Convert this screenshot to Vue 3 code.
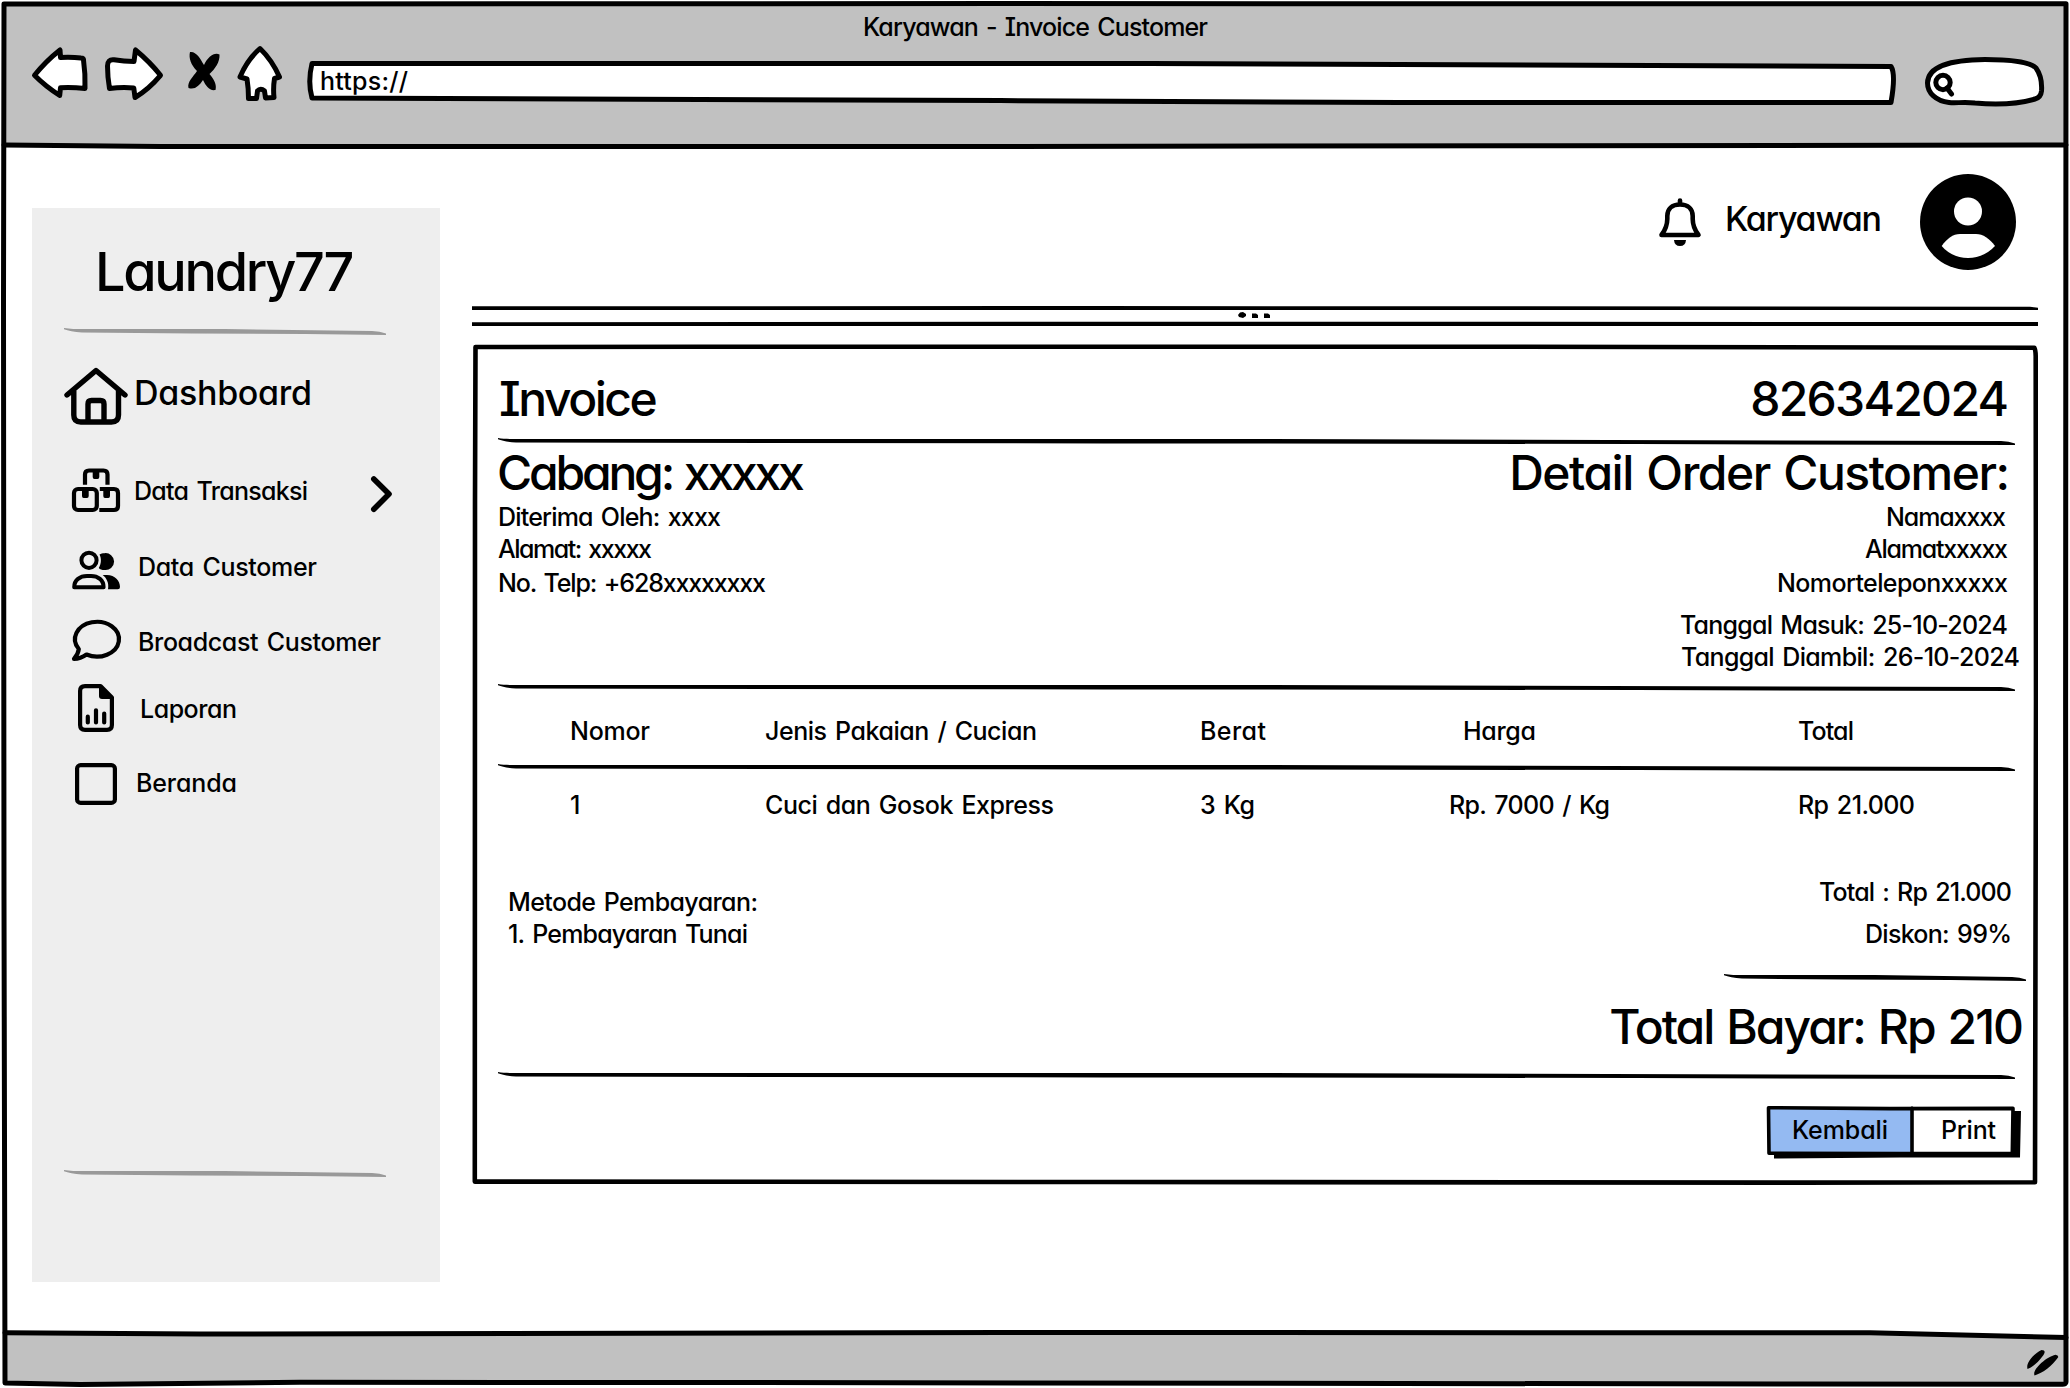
<script setup>
// Adjusts tracking so that a label fills the given width in pixels.
const vFit = {
  mounted(el, { value }) {
    const size = parseFloat(getComputedStyle(el).fontSize)
    const count = el.textContent.trim().length
    if (count < 2) return
    const natural = el.getBoundingClientRect().width
    const spacing = (value + size * 0.12 - natural) / (count - 1)
    el.style.letterSpacing = `${spacing}px`
    el.style.marginRight = `${-spacing}px`
  },
}

// Hand-drawn divider with tapered ends.
const rule = (w) =>
  `M0 0C6 1 12 1 20 1L${w * 0.5} 1L${w - 14} 3Q${w - 6} 3.4 ${w} 5.6V7L${w * 0.75} 6L${w * 0.4} 5.4L18 4.6C10 4 4 2.6 0 1.2Z`

const columns = [
  { label: 'Nomor', width: 77 },
  { label: 'Jenis Pakaian / Cucian', width: 269 },
  { label: 'Berat', width: 63 },
  { label: 'Harga', width: 70, inset: true },
  { label: 'Total', width: 53 },
]
const cells = [
  { label: '1', width: 9 },
  { label: 'Cuci dan Gosok Express', width: 286 },
  { label: '3 Kg', width: 52 },
  { label: 'Rp. 7000 / Kg', width: 158 },
  { label: 'Rp 21.000', width: 114 },
]
</script>

<template>
  <div class="window">
    <svg class="layer" viewBox="0 0 2070 1388" width="2070" height="1388">
      <path fill="#c1c1c1" d="M4 4H2066V145H4ZM5 1333L1870 1333L2066 1337V1384H5Z" />
      <g class="ink" stroke-width="5">
        <path d="M4 4L1000 3.6L2066 3.8L2065.6 700L2066 1382Q2066 1384.5 2062 1384.3L1800 1384L700 1382.5L300 1382.3L80 1384.5L5 1383L4 900L3.500 300Z" />
        <path d="M4 145L160 146.400L1000 146.400L1560 145.800L2066 145" />
        <path d="M5 1332.800L200 1334L1000 1332.500L1870 1332.800L2066 1337.600" />
      </g>
      <path d="M2027.500 1369C2025.500 1362 2035 1353 2041.500 1350C2045 1350 2045.500 1352 2043.500 1355C2038 1362.500 2033 1367 2027.500 1369ZM2034.500 1375.500C2032 1369.500 2046 1357 2055.500 1354.700Q2059 1355.500 2058 1357.500C2052 1366 2043 1373 2034.500 1375.500Z" />
    </svg>

    <div class="layer page">
      <header class="chrome">
        <div class="title"><span v-fit="342">Karyawan - Invoice Customer</span></div>
        <div class="toolbar">
          <svg class="ink white back" viewBox="30 44 62 64" width="62" height="64" stroke-width="5">
            <path d="M34.500 75.300Q46 61 60 50L60.500 57.500Q72 57 81 58Q83.500 58 83.500 60Q85.500 74 85 88.500Q72 87 60.500 87.700L59.700 95.500Q45 86 34.500 75.300Z" />
          </svg>
          <svg class="ink white forward" viewBox="102 44 64 64" width="64" height="64" stroke-width="5">
            <path d="M160.500 75.300Q150 62 135.500 50L134 61.500Q124 61.500 114 59.800Q107.500 59 107.500 66Q107.500 77 109.500 88.500Q122 87 133.800 88L135 97.500Q149 89 160.500 75.300Z" />
          </svg>
          <svg class="stop" viewBox="186 44 36 64" width="36" height="64">
            <path d="M190 52C196 51 200 58 204 65C208 57 214 52 219.500 54.500C220 62 215 69 209.500 74C214 79 217 85 215.500 90C209 91 206 86 203 80C199 86 195 90 188.500 88C187 82 193 77 197 71C191 65 188.500 58 190 52Z" />
          </svg>
          <svg class="ink white homepage" viewBox="236 44 50 64" width="50" height="64" stroke-width="5">
            <path d="M260 48.500Q272 60 279.500 77L274.500 78.500Q273 88 274 97.500L265.500 98L264.500 91Q260.500 87.500 257.500 91L256.500 98.500L248.500 98.500Q248.500 88 247 79L240 77Q247 60 260 48.500Z" />
          </svg>
          <div class="address">
            <svg class="ink white layer" viewBox="306 58 1592 50" width="1592" height="50" stroke-width="5">
              <path d="M312 63.500L1150 63.500L1891 66.500Q1896 74 1891 102.500L1400 102.600L1000 100.600L312 98Q307.500 82 312 63.500Z" />
            </svg>
            <div class="layer url"><span v-fit="85">https://</span></div>
          </div>
          <svg class="ink white search" viewBox="1922 54 126 56" width="126" height="56" stroke-width="5">
            <path d="M1927.500 83C1928 66 1950 60 1985 59.500C2010 59.500 2030 62 2036 68C2041 75 2042 84 2041.500 91C2041 96 2039 98 2035 99C2018 104 1998 105 1975 103C1962 101.500 1957 103.500 1949 102.500C1936 101 1927.500 93 1927.500 83Z" />
            <circle cx="1943" cy="82.500" r="7.200" />
            <path d="M1947 88L1951.500 94" />
          </svg>
        </div>
      </header>

      <div class="body">
        <aside class="sidebar">
          <h1><span v-fit="253">Laundry77</span></h1>
          <svg class="rule gray" width="322" height="8"><path :d="rule(322)" /></svg>
          <nav>
            <a class="item dashboard">
              <svg class="ink icon" viewBox="62 364 68 64" width="68" height="64" stroke-width="5.400">
                <path d="M67 395L96 370.500L125 395M73.800 391V415Q73.800 422 80.800 422H111.500Q118.500 422 118.500 415V391M88 422V404Q88 400.500 91.500 400.500H100.500Q104 400.500 104 404V422" />
              </svg>
              <span v-fit="174">Dashboard</span>
            </a>
            <a class="item transaksi">
              <svg class="ink icon butt" viewBox="62 464 68 52" width="68" height="52" stroke-width="4.200">
                <path d="M85 484.800V474.500Q85 470.500 89 470.500H103.500Q107.500 470.500 107.500 474.500V484.800" />
                <rect x="74" y="489" width="22.800" height="21" rx="4" />
                <path d="M99.800 489H114Q118 489 118 493V506Q118 510 114 510H99.300" />
                <path class="solid" d="M92.700 470H99.300V477Q99.300 479 97.500 479H94.500Q92.700 479 92.700 477ZM82 489H88.700V496Q88.700 498 87 498H83.700Q82 498 82 496ZM103.300 489H110V496Q110 498 108.300 498H105Q103.300 498 103.300 496Z" />
              </svg>
              <span v-fit="171">Data Transaksi</span>
              <svg class="ink chevron" viewBox="368 472 28 44" width="28" height="44" stroke-width="5.600">
                <path d="M373.800 479L389 494L373.800 509.300" />
              </svg>
            </a>
            <a class="item customer">
              <svg class="ink icon" viewBox="62 546 68 48" width="68" height="48" stroke-width="4">
                <circle cx="89" cy="560.300" r="7.600" />
                <path d="M74.200 587.200C74.200 580 80 576 87 576H91C98 576 103.600 580 103.600 587.200Z" />
                <path class="solid" d="M99.500 554.600C101 553.500 102.500 553.200 104.300 553.200A8.500 8.500 0 1 1 104.300 570C102 570 100 569.200 98.800 567.900C101.500 563.500 101.500 558.500 99.500 554.600ZM102.700 575H107C115 575 120 581 120 587Q120 589.300 117.700 589.300H108C109.300 583 106.500 578 102.700 575Z" />
              </svg>
              <span v-fit="176">Data Customer</span>
            </a>
            <a class="item broadcast">
              <svg class="ink icon" viewBox="62 616 68 48" width="68" height="48" stroke-width="4.200">
                <path d="M86.500 654.500C82.500 657.300 78 658.800 74 658.900C76.500 656 78.500 652 78.800 649A22 17.400 0 1 1 86.500 654.500Z" />
              </svg>
              <span v-fit="240">Broadcast Customer</span>
            </a>
            <a class="item laporan">
              <svg class="ink icon" viewBox="62 682 68 52" width="68" height="52" stroke-width="4.200">
                <path d="M85 686.100H100.500L111.900 697.500V725Q111.900 729.900 107 729.900H85Q80.100 729.900 80.100 725V691Q80.100 686.100 85 686.100Z" />
                <path class="solid" d="M99 685L113 699H102Q99 699 99 696Z" />
                <path d="M87.800 716.700V722.500M96 710.300V722.500M104.200 713.500V722.500" />
              </svg>
              <span v-fit="94">Laporan</span>
            </a>
            <a class="item beranda">
              <svg class="ink icon" viewBox="62 760 68 48" width="68" height="48" stroke-width="4.200">
                <rect x="77.100" y="765.100" width="37.800" height="37.800" rx="3.500" />
              </svg>
              <span v-fit="98">Beranda</span>
            </a>
          </nav>
          <svg class="rule gray last" width="322" height="8"><path :d="rule(322)" /></svg>
        </aside>

        <main>
          <div class="account">
            <svg class="ink bell" viewBox="1656 194 48 56" width="48" height="56" stroke-width="4.600">
              <path d="M1661.500 235C1666 229 1667.300 225 1667.300 219V216C1667.300 209 1672 204.500 1680 204.500C1688 204.500 1692.700 209 1692.700 216V219C1692.700 225 1694 229 1698.500 235ZM1680 200.500V204" />
              <path class="solid" d="M1674 240H1686Q1685.500 246 1680 246Q1674.500 246 1674 240Z" />
            </svg>
            <span class="user" v-fit="153">Karyawan</span>
            <svg class="avatar" viewBox="1920 174 96 96" width="96" height="96">
              <circle cx="1968" cy="222" r="48" />
              <circle cx="1968" cy="211.500" r="14" fill="#fff" />
              <path fill="#fff" d="M1941.700 246C1947 238.500 1953 234 1960 234H1976C1983 234 1989.500 238.500 1995 246C1988 253.500 1978.500 258 1968 258C1957.500 258 1948 253.500 1941.700 246Z" />
            </svg>
          </div>

          <svg class="splitter" viewBox="472 304 1566 24" width="1566" height="24">
            <path d="M472 306.300L1100 306L2030 306.800L2038 307.800V310H472ZM472 322.300L1200 321.700L2038 322V326H472Z" />
            <path d="M1238 315L1240 312.500L1243 312L1246 314V316L1243 318L1239 317ZM1252 313.500H1256L1258 315V318H1252ZM1264 313.500H1268L1270 315V318H1264Z" />
          </svg>

          <section class="card">
            <svg class="layer frame" viewBox="472 342 1566 844" width="1566" height="844" stroke-width="4.600">
              <path d="M475.500 347L700 346.700L1500 346.700L2034.300 347.700Q2035.600 350 2035.700 356L2036 700L2035 1182.300L1800 1182.600L1100 1182L474.800 1181.600L475 500Z" />
            </svg>
            <div class="layer content">
              <div class="heading">
                <span class="name" v-fit="153">Invoice</span>
                <span v-fit="253">826342024</span>
              </div>
              <svg class="rule" width="1517" height="8"><path :d="rule(1517)" /></svg>

              <div class="details">
                <div class="branch">
                  <h2><span v-fit="302">Cabang: xxxxx</span></h2>
                  <p><span v-fit="220">Diterima Oleh: xxxx</span></p>
                  <p><span v-fit="151">Alamat: xxxxx</span></p>
                  <p class="phone"><span v-fit="265">No. Telp: +628xxxxxxxx</span></p>
                </div>
                <div class="order">
                  <h2><span v-fit="495">Detail Order Customer:</span></h2>
                  <p class="customer-name"><span v-fit="117">Namaxxxx</span></p>
                  <p><span v-fit="140">Alamatxxxxx</span></p>
                  <p class="phone"><span v-fit="228">Nomorteleponxxxxx</span></p>
                  <p class="received"><span v-fit="325">Tanggal Masuk: 25-10-2024</span></p>
                  <p class="pickup"><span v-fit="336">Tanggal Diambil: 26-10-2024</span></p>
                </div>
              </div>
              <svg class="rule" width="1517" height="8"><path :d="rule(1517)" /></svg>

              <div class="row head">
                <div v-for="c in columns" :key="c.label" :class="{ inset: c.inset }">
                  <span v-fit="c.width">{{ c.label }}</span>
                </div>
              </div>
              <svg class="rule" width="1517" height="8"><path :d="rule(1517)" /></svg>
              <div class="row">
                <div v-for="c in cells" :key="c.label">
                  <span v-fit="c.width">{{ c.label }}</span>
                </div>
              </div>

              <div class="summary">
                <div class="method">
                  <p><span v-fit="247">Metode Pembayaran:</span></p>
                  <p><span v-fit="237">1. Pembayaran Tunai</span></p>
                </div>
                <div class="amounts">
                  <p><span v-fit="190">Total : Rp 21.000</span></p>
                  <p><span v-fit="144">Diskon: 99%</span></p>
                </div>
              </div>
              <svg class="rule short" width="302" height="8"><path :d="rule(302)" /></svg>
              <div class="grand"><span v-fit="409">Total Bayar: Rp 210</span></div>
              <svg class="rule" width="1517" height="8"><path :d="rule(1517)" /></svg>

              <div class="actions">
                <svg class="layer" viewBox="1766 1104 256 58" width="256" height="58">
                  <path d="M1774 1112H2021L2020 1158.500L1900 1158.500L1774 1159.500Z" />
                  <path fill="#fff" d="M1769 1109H2012V1155H1769Z" />
                  <path fill="#94baf2" d="M1769 1109H1912V1155H1769Z" />
                  <path class="ink" stroke-width="3.600" d="M1768.500 1108.700L1890 1109.600L2013 1109.400L2012.300 1154.600L1900 1154.500L1769 1154.300ZM1912 1109V1155" />
                </svg>
                <div class="layer labels">
                  <span v-fit="93">Kembali</span>
                  <span v-fit="52">Print</span>
                </div>
              </div>
            </div>
          </section>
        </main>
      </div>
    </div>
  </div>
</template>

<style>
body {
  margin: 0;
  background: #fff;
}
</style>

<style scoped>
.window {
  display: grid;
  width: 2070px;
  height: 1388px;
  overflow: hidden;
  color: #000;
  font: 500 25px/32px Inter, "Noto Sans", sans-serif;
  font-feature-settings: "cv11" 1, "cv08" 1, "calt" 0;
  word-spacing: 0.09em;
}
.layer {
  grid-area: 1 / 1;
}
svg {
  display: block;
  flex: none;
}
span {
  display: inline-block;
  white-space: nowrap;
}
h1,
h2,
p {
  margin: 0;
  font-weight: 500;
}
.ink {
  fill: none;
  stroke: #000;
  stroke-linecap: round;
  stroke-linejoin: round;
}
.white {
  fill: #fff;
}
.butt {
  stroke-linecap: butt;
}
.solid {
  fill: #000;
  stroke: none;
}
.page {
  display: flex;
  flex-direction: column;
}

.chrome {
  box-sizing: border-box;
  height: 149px;
  padding-top: 11px;
}
.title {
  height: 33px;
  padding-left: 863px;
}
.toolbar {
  display: flex;
  padding-left: 30px;
}
.forward {
  margin-left: 10px;
}
.stop {
  margin-left: 20px;
}
.homepage {
  margin-left: 14px;
}
.address {
  display: grid;
  margin: 14px 0 0 20px;
}
.url {
  padding: 7px 0 0 14px;
}
.search {
  margin: 10px 0 0 24px;
}

.body {
  display: flex;
}
.sidebar {
  box-sizing: border-box;
  width: 408px;
  height: 1074px;
  margin: 59px 0 0 32px;
  padding: 34px 0 0 32px;
  background: #eee;
}
.sidebar h1 {
  height: 86px;
  padding-left: 31px;
  font-size: 54px;
  line-height: 60px;
}
.rule.gray {
  fill: #999;
}
nav {
  display: flex;
  flex-direction: column;
  margin-left: -2px;
  padding-top: 28px;
}
.item {
  display: flex;
  align-items: flex-start;
}
.item span {
  margin-left: 8px;
}
.dashboard {
  height: 100px;
  font-size: 34px;
  line-height: 44px;
}
.dashboard span {
  margin-left: 4px;
  padding-top: 7px;
}
.transaksi {
  height: 82px;
}
.transaksi span {
  margin-left: 4px;
  padding-top: 11px;
}
.chevron {
  margin: 8px 0 0 60px;
}
.customer {
  height: 70px;
}
.customer span {
  padding-top: 5px;
}
.broadcast {
  height: 66px;
}
.broadcast span {
  padding-top: 10px;
}
.laporan {
  height: 78px;
}
.laporan span {
  margin-left: 10px;
  padding-top: 11px;
}
.beranda span {
  margin-left: 6px;
  padding-top: 7px;
}
.beranda {
  height: 410px;
}

main {
  margin-left: 32px;
}
.account {
  display: flex;
  justify-content: flex-end;
  align-items: flex-start;
  height: 130px;
  padding: 25px 22px 0 0;
}
.bell {
  margin-top: 20px;
}
.user {
  margin: 23px 0 0 21px;
  font-size: 34px;
  line-height: 44px;
}
.avatar {
  margin-left: 38px;
}
.card {
  display: grid;
  width: 1566px;
  height: 844px;
  margin-top: 14px;
}
.frame {
  fill: none;
  stroke: #000;
  stroke-linejoin: round;
}
.content {
  display: flex;
  flex-direction: column;
  padding: 2px 23px 0 26px;
}
.heading {
  display: flex;
  justify-content: space-between;
  box-sizing: border-box;
  height: 94px;
  padding: 25px 6px 0 1px;
  font-size: 48px;
  line-height: 60px;
}
.details {
  display: flex;
  justify-content: space-between;
  height: 238px;
}
.details h2 {
  margin-top: -1px;
  font-size: 48px;
  line-height: 56px;
}
.branch h2 {
  margin-left: -1px;
}
.phone {
  margin-top: 2px;
}
.order {
  display: flex;
  flex-direction: column;
  align-items: flex-end;
  padding-right: 5px;
}
.order p {
  margin-right: 2px;
}
.order .customer-name {
  margin-right: 4px;
}
.received {
  margin-top: 10px;
}
.order .pickup {
  margin-right: -10px;
}
.row {
  display: grid;
  grid-template-columns: 195px 435px 249px 349px auto;
  box-sizing: border-box;
  height: 104px;
  padding: 17px 0 0 72px;
}
.row.head {
  height: 72px;
  padding-top: 23px;
}
.inset {
  margin-left: 14px;
}
.summary {
  display: flex;
  justify-content: space-between;
  height: 98px;
}
.method {
  padding: 10px 0 0 10px;
}
.amounts {
  display: flex;
  flex-direction: column;
  align-items: flex-end;
  gap: 10px;
  padding: 0 3px 0 0;
}
.short {
  align-self: flex-end;
  margin-right: -11px;
}
.grand {
  align-self: flex-end;
  height: 75px;
  margin: 15px -9px 0 0;
  font-size: 48px;
  line-height: 60px;
}
.actions {
  display: grid;
  align-self: flex-end;
  width: 256px;
  margin: 23px -7px 0 0;
}
.labels {
  display: flex;
  padding: 11px 0 0 26px;
}
.labels span + span {
  margin-left: 53px;
}
</style>
